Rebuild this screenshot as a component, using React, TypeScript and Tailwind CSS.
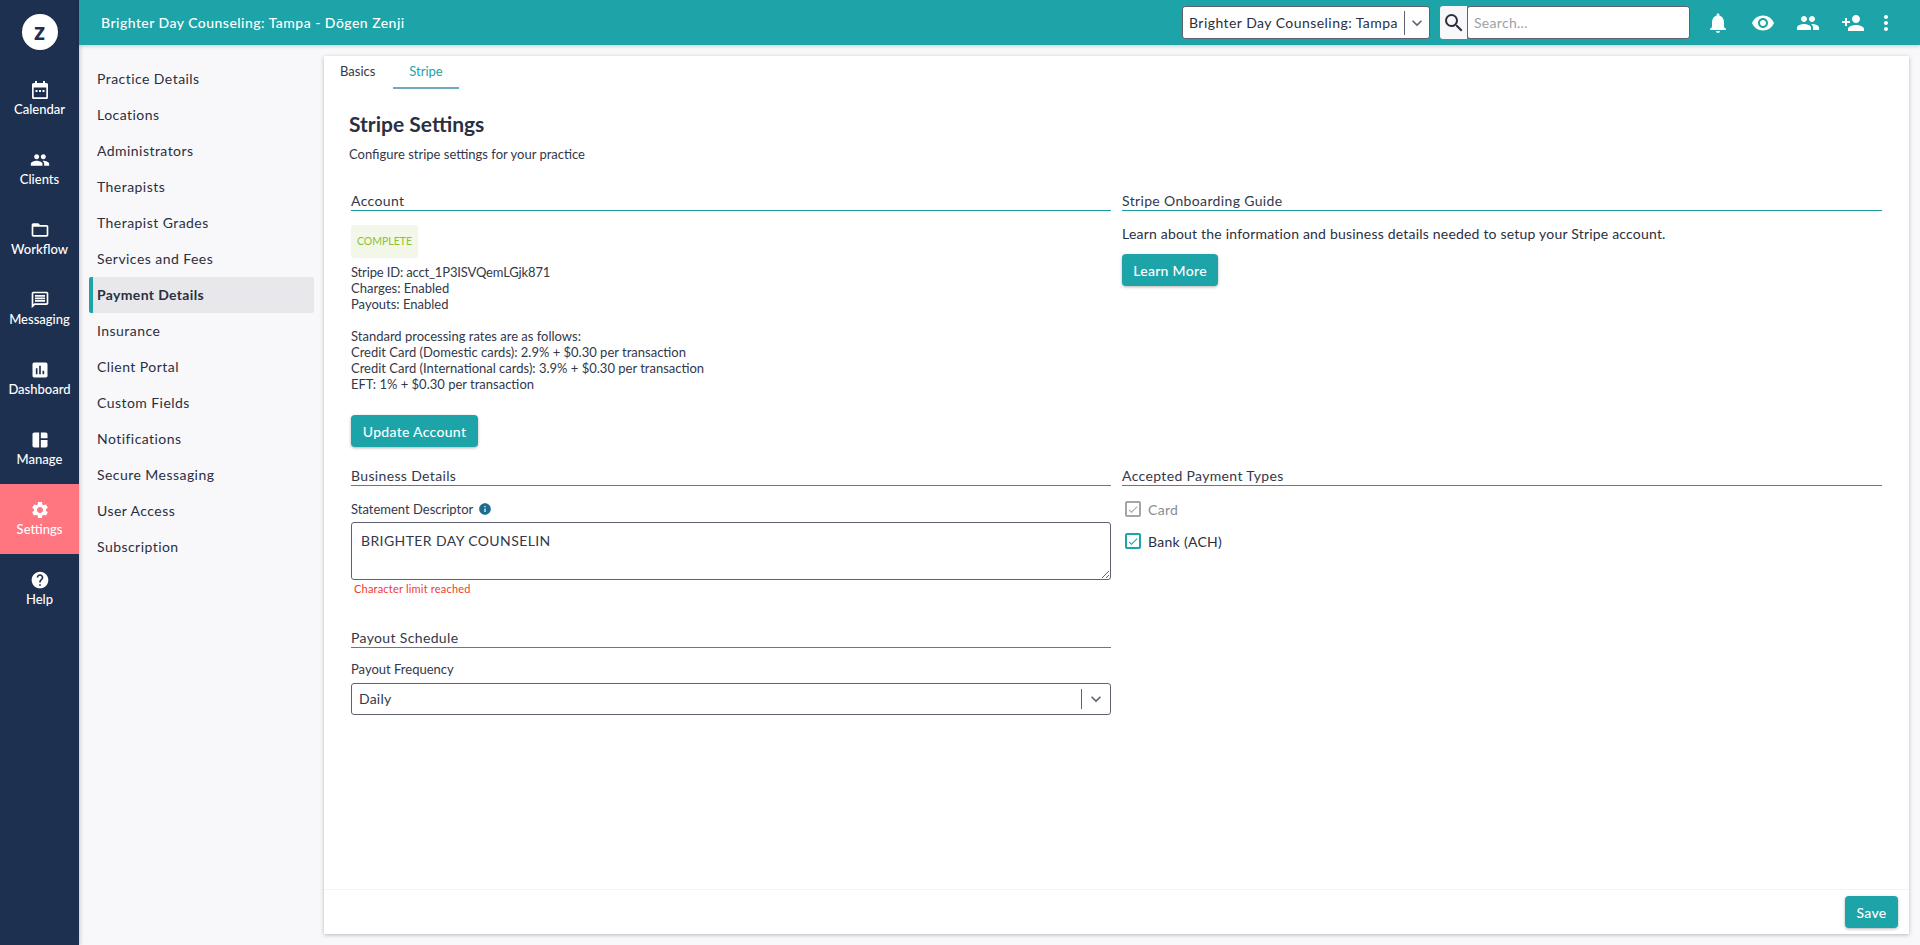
import { ReactNode } from "react";
import {
  MdAssessment,
  MdCheck,
  MdFolderOpen,
  MdHelp,
  MdInfo,
  MdKeyboardArrowDown,
  MdMoreVert,
  MdNotifications,
  MdOutlineMessage,
  MdPeople,
  MdPersonAdd,
  MdRemoveRedEye,
  MdSearch,
  MdSettings,
  MdSpaceDashboard,
} from "react-icons/md";

function CalendarIcon({ size }: { size: number }) {
  return (
    <svg width={size} height={size} viewBox="0 0 20 20" fill="currentColor">
      <path d="M5 1h2v2h6V1h2v2h1.5A1.5 1.5 0 0 1 18 4.500v13a1.500 1.500 0 0 1-1.500 1.500h-13A1.500 1.500 0 0 1 2 17.500v-13A1.500 1.500 0 0 1 3.500 3H5V1zm-1.300 6.500v9.800h12.600V7.500H3.700z" />
      <rect x="5.500" y="10" width="2" height="2" />
      <rect x="9" y="10" width="2" height="2" />
      <rect x="12.500" y="10" width="2" height="2" />
    </svg>
  );
}

const mainNav = [
  { label: "Calendar", icon: CalendarIcon },
  { label: "Clients", icon: MdPeople },
  { label: "Workflow", icon: MdFolderOpen },
  { label: "Messaging", icon: MdOutlineMessage },
  { label: "Dashboard", icon: MdAssessment },
  { label: "Manage", icon: MdSpaceDashboard },
  { label: "Settings", icon: MdSettings, active: true },
  { label: "Help", icon: MdHelp },
];

const subNav = [
  "Practice Details",
  "Locations",
  "Administrators",
  "Therapists",
  "Therapist Grades",
  "Services and Fees",
  "Payment Details",
  "Insurance",
  "Client Portal",
  "Custom Fields",
  "Notifications",
  "Secure Messaging",
  "User Access",
  "Subscription",
];

function SectionTitle({ children }: { children: ReactNode }) {
  return (
    <div className="h-[18px] border-b border-[#1b9aa0] text-[14px] leading-[16px] tracking-[0.35px] text-[#33384a]">
      {children}
    </div>
  );
}

function TealButton({ children, className }: { children: ReactNode; className: string }) {
  return (
    <button
      className={`flex items-center justify-center rounded-[4px] bg-[#1ca4a8] text-[14px] font-medium tracking-[0.3px] text-white shadow-[0_1px_3px_rgba(0,0,0,0.3)] ${className}`}
    >
      {children}
    </button>
  );
}

function Checkbox({ label, disabled }: { label: string; disabled?: boolean }) {
  return (
    <div className="flex h-[32px] items-center gap-[7px] pl-[3px]">
      <span
        className={`flex h-[16px] w-[16px] items-center justify-center rounded-[2px] border-2 ${
          disabled ? "border-[#a3a5ab] text-[#a3a5ab]" : "border-[#1ca4a8] text-[#1ca4a8]"
        }`}
      >
        <MdCheck size={13} />
      </span>
      <span className={`text-[14px] tracking-[0.3px] ${disabled ? "text-[#8a8c94]" : "text-[#2b2f40]"}`}>
        {label}
      </span>
    </div>
  );
}

export default function App() {
  return (
    <div className="flex h-screen overflow-hidden bg-[#f8f8fb] font-['Lato','Liberation_Sans',sans-serif] text-[#33384a]">
      <aside className="z-10 flex w-[79px] shrink-0 flex-col bg-[#1e3050] shadow-[1px_0_4px_rgba(0,0,0,0.2)]">
        <div className="flex h-[64px] shrink-0 items-start justify-center pt-[14px]">
          <div className="flex h-[36px] w-[36px] items-center justify-center rounded-full bg-white pb-[3px] text-[24px] font-black leading-none text-[#1e3050]">
            z
          </div>
        </div>
        {mainNav.map((item) => (
          <div
            key={item.label}
            className={`flex h-[70px] shrink-0 flex-col items-center justify-center pb-[2px] text-white ${
              item.active ? "bg-[#ff7580]" : ""
            }`}
          >
            <item.icon size={20} />
            <span className="mt-[1px] text-[13px] font-medium leading-[16px]">{item.label}</span>
          </div>
        ))}
      </aside>

      <div className="flex min-w-0 flex-1 flex-col">
        <header className="z-10 flex h-[45px] shrink-0 items-center bg-[#1ca4a8] pl-[22px] pr-[22px] text-white shadow-[0_1px_4px_rgba(0,0,0,0.2)]">
          <span className="text-[14px] font-medium tracking-[0.47px]">
            Brighter Day Counseling: Tampa - Dōgen Zenji
          </span>
          <div className="ml-auto flex h-[33px] w-[248px] items-center rounded-[3px] border border-[#5f6170] bg-white pl-[6px] text-[14px] tracking-[0.45px] text-[#2b2f40]">
            <span className="flex-1 whitespace-nowrap">Brighter Day Counseling: Tampa</span>
            <span className="h-[24px] border-l border-[#5f6170]" />
            <MdKeyboardArrowDown size={20} className="mx-[2px] text-[#5f6170]" />
          </div>
          <div className="ml-[10px] flex h-[33px] w-[27px] items-center justify-center rounded-l-[3px] bg-[#f8f8fb] text-[#2b2f40]">
            <MdSearch size={24} />
          </div>
          <div className="flex h-[33px] w-[223px] items-center rounded-[3px] border border-[#5f6170] bg-white pl-[6px] text-[14px] tracking-[0.3px] text-[#a0a2a8]">
            Search...
          </div>
          <div className="ml-[16px] flex items-center gap-[21px]">
            <MdNotifications size={24} />
            <MdRemoveRedEye size={24} />
            <MdPeople size={24} />
            <MdPersonAdd size={24} />
            <MdMoreVert size={24} className="-ml-[12px]" />
          </div>
        </header>

        <div className="flex min-h-0 flex-1">
          <nav className="w-[245px] shrink-0 pl-[10px] pt-[16px]">
            {subNav.map((item) =>
              item === "Payment Details" ? (
                <div
                  key={item}
                  className="flex h-[36px] w-[225px] items-center rounded-[2px] border-l-4 border-[#1ca4a8] bg-[#e8e8ec] pb-[2px] pl-[4px] text-[14px] font-bold tracking-[0.35px] text-[#2b2f40]"
                >
                  {item}
                </div>
              ) : (
                <div
                  key={item}
                  className="flex h-[36px] w-[225px] items-center pb-[2px] pl-[8px] text-[14px] tracking-[0.45px] text-[#2b2f40]"
                >
                  {item}
                </div>
              ),
            )}
          </nav>

          <main className="flex min-w-0 flex-1 flex-col pb-[11px] pr-[11px] pt-[11px]">
            <div className="flex min-h-0 flex-1 flex-col bg-white shadow-[0_1px_4px_rgba(0,0,0,0.25)]">
              <div className="flex h-[33px] shrink-0 text-[13px] leading-[31px]">
                <div className="w-[69px] pl-[16px] text-[#33384a]">Basics</div>
                <div className="w-[66px] border-b-2 border-[#6fabbf] text-center text-[#1ca4a8]">Stripe</div>
              </div>

              <div className="flex-1 pl-[25px] pr-[27px]">
                <h1 className="mt-[23px] text-[21px] font-bold leading-[24px] text-[#2b2f40]">Stripe Settings</h1>
                <p className="mt-[10px] text-[13px] leading-[16px] text-[#33384a]">
                  Configure stripe settings for your practice
                </p>

                <div className="mt-[31px] grid grid-cols-2 gap-x-[11px] pl-[2px]">
                  <section className="h-[275px]">
                    <SectionTitle>Account</SectionTitle>
                    <div className="mt-[14px] flex h-[33px] w-[67px] items-center justify-center rounded-[3px] bg-[#f2f7ea] text-[10.500px] text-[#8cc22c]">
                      COMPLETE
                    </div>
                    <div className="mt-[6px] text-[13px] leading-[16px] text-[#33384a]">
                      <p className="tracking-[-0.15px]">Stripe ID: acct_1P3ISVQemLGjk871</p>
                      <p>Charges: Enabled</p>
                      <p>Payouts: Enabled</p>
                      <p className="mt-[16px]">Standard processing rates are as follows:</p>
                      <p>Credit Card (Domestic cards): 2.9% + $0.30 per transaction</p>
                      <p>Credit Card (International cards): 3.9% + $0.30 per transaction</p>
                      <p>EFT: 1% + $0.30 per transaction</p>
                    </div>
                    <TealButton className="mt-[23px] h-[32px] w-[127px]">Update Account</TealButton>
                  </section>

                  <section>
                    <SectionTitle>Stripe Onboarding Guide</SectionTitle>
                    <p className="mt-[14px] text-[14px] leading-[18px] tracking-[0.2px] text-[#2b2f40]">
                      Learn about the information and business details needed to setup your Stripe account.
                    </p>
                    <TealButton className="mt-[11px] h-[32px] w-[96px]">Learn More</TealButton>
                  </section>

                  <section>
                    <SectionTitle>Business Details</SectionTitle>
                    <div className="mt-[15px] flex items-center gap-[5px] text-[13px] leading-[16px]">
                      Statement Descriptor
                      <MdInfo size={14} className="text-[#1d6d91]" />
                    </div>
                    <textarea
                      readOnly
                      defaultValue="BRIGHTER DAY COUNSELIN"
                      className="mt-[5px] block h-[58px] w-full rounded-[3px] border border-[#5f6170] px-[9px] py-[9px] text-[14px] leading-[18px] tracking-[0.4px] text-[#33384a] outline-none"
                    />
                    <p className="mt-[2px] pl-[3px] text-[11px] leading-[14px] tracking-[0.2px] text-[#ee3b33]">
                      Character limit reached
                    </p>

                    <div className="mt-[34px]">
                      <SectionTitle>Payout Schedule</SectionTitle>
                    </div>
                    <div className="mt-[13px] text-[13px] leading-[16px]">Payout Frequency</div>
                    <div className="mt-[6px] flex h-[32px] items-center rounded-[3px] border border-[#5f6170] pl-[7px] text-[14px] tracking-[0.2px] text-[#33384a]">
                      <span className="flex-1 pb-[2px]">Daily</span>
                      <span className="h-[20px] border-l border-[#5f6170]" />
                      <MdKeyboardArrowDown size={20} className="mx-[4px] text-[#5f6170]" />
                    </div>
                  </section>

                  <section>
                    <SectionTitle>Accepted Payment Types</SectionTitle>
                    <div className="mt-[7px]">
                      <Checkbox label="Card" disabled />
                      <Checkbox label="Bank (ACH)" />
                    </div>
                  </section>
                </div>
              </div>

              <div className="flex h-[45px] shrink-0 items-start justify-end border-t border-[#f3f3f5] pr-[11px] pt-[6px]">
                <TealButton className="h-[32px] w-[53px] text-[13px]">Save</TealButton>
              </div>
            </div>
          </main>
        </div>
      </div>
    </div>
  );
}
